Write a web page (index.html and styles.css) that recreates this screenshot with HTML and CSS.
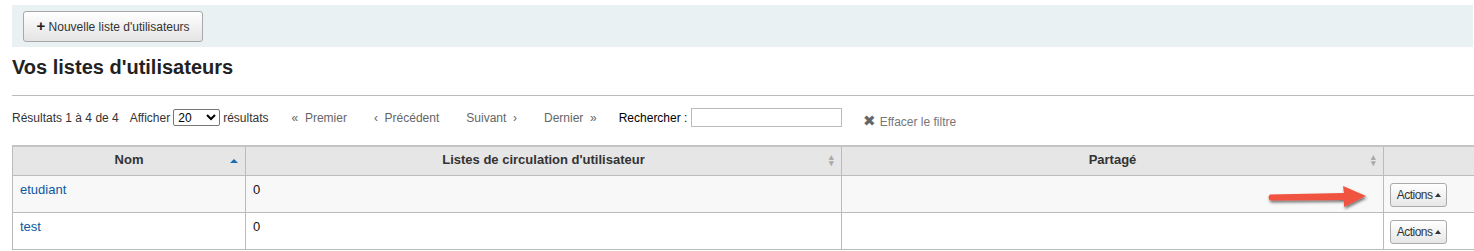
FILE: index.html
```html
<!DOCTYPE html>
<html lang="fr">
<head>
    <meta charset="UTF-8">
    <title>Listes d'utilisateurs</title>
    <link rel="stylesheet" href="styles.css">
</head>
<body>
    <div class="page">
        <!-- Barre d'outils -->
        <div class="toolbar">
            <button class="btn"><span class="plus">+</span> Nouvelle liste d'utilisateurs</button>
        </div>

        <h1 class="titre">Vos listes d'utilisateurs</h1>
        <hr class="sep">

        <!-- Pagination et recherche -->
        <div class="pager">
            <span class="info">Résultats 1 à 4 de 4</span>
            <label class="afficher">Afficher
                <select class="choix"><option>20</option></select>
                résultats</label>
            <span class="nav nav-premier">&laquo;&nbsp; Premier</span>
            <span class="nav">&lsaquo;&nbsp; Précédent</span>
            <span class="nav">Suivant &nbsp;&rsaquo;</span>
            <span class="nav">Dernier &nbsp;&raquo;</span>
            <label class="recherche">Rechercher :
                <input type="text" class="champ"></label>
            <span class="effacer"><span class="croix">&#10006;</span> Effacer le filtre</span>
        </div>

        <table class="listes">
            <colgroup>
                <col style="width: 233px">
                <col style="width: 596px">
                <col style="width: 542px">
                <col style="width: 120px">
            </colgroup>
            <thead>
                <tr>
                    <th class="tri-actif">Nom</th>
                    <th class="tri">Listes de circulation d'utilisateur</th>
                    <th class="tri">Partagé</th>
                    <th></th>
                </tr>
            </thead>
            <tbody>
                <tr class="impair">
                    <td><a href="#">etudiant</a></td>
                    <td>0</td>
                    <td></td>
                    <td class="cell-actions"><button class="btn-actions">Actions <span class="fleche"></span></button></td>
                </tr>
                <tr>
                    <td><a href="#">test</a></td>
                    <td>0</td>
                    <td></td>
                    <td class="cell-actions"><button class="btn-actions">Actions <span class="fleche"></span></button></td>
                </tr>
            </tbody>
        </table>

        <!-- Flèche d'annotation -->
        <svg class="annotation" width="110" height="30" viewBox="0 0 110 30">
            <defs>
                <filter id="ombre" x="-20%" y="-50%" width="140%" height="200%">
                    <feDropShadow dx="1" dy="2" stdDeviation="1.5" flood-color="#000" flood-opacity="0.55"/>
                </filter>
            </defs>
            <path d="M6 11.5 L80 10 L79 3 L102 13 L80 24 L80 17 L6 17.5 Q3 14.5 6 11.5 Z" fill="#f0533f" filter="url(#ombre)"/>
        </svg>
    </div>
</body>
</html>
```

FILE: styles.css
```css
*{
    box-sizing: border-box;
}
body{
    margin: 0;
    font-family: "Liberation Sans", Arial, sans-serif;
    font-size: 12px;
    color: #333;
    background: #fff;
    overflow: hidden;
}
.page{
    position: relative;
    padding: 5px 0 0 12px;
    width: 1474px;
}
.toolbar{
    background-color: #eaf1f3;
    height: 42px;
    padding: 6px 11px;
    margin-right: 1px;
}
.btn{
    height: 31px;
    width: 180px;
    border: 1px solid #a8a8a8;
    border-radius: 3px;
    background: linear-gradient(#fff, #e4e4e4);
    font-family: "Liberation Sans", Arial, sans-serif;
    font-size: 12px;
    color: #333;
    padding: 0 0 2px 0;
}
.plus{
    font-weight: bold;
    font-size: 15px;
    color: #222;
}
.titre{
    font-size: 20px;
    font-weight: bold;
    color: #222;
    margin: 9px 0 0 0;
    height: 31px;
}
.sep{
    border: none;
    border-top: 1px solid #bbb;
    margin: 8px 0 0 0;
}
.pager{
    display: flex;
    align-items: center;
    height: 41px;
    padding-top: 2px;
    white-space: nowrap;
}
.info{
    color: #333;
    margin-right: 11px;
}
.afficher{
    display: flex;
    align-items: center;
    color: #333;
}
.choix{
    width: 47px;
    height: 17px;
    margin: 0 3px 0 3px;
    font-family: "Liberation Sans", Arial, sans-serif;
    font-size: 12px;
    border: 1px solid #767676;
    border-radius: 2px;
    padding: 0;
    background: #fff;
}
.nav{
    color: #666;
    margin-left: 27px;
}
.nav-premier{
    margin-left: 23px;
}
.recherche{
    display: flex;
    align-items: center;
    color: #000;
    margin-left: 22px;
}
.champ{
    width: 151px;
    height: 19px;
    margin-left: 4px;
    border: 1px solid #bbb;
    padding: 0;
}
.effacer{
    color: #777;
    margin: 6px 0 0 21px;
}
.croix{
    font-size: 15px;
    color: #666;
}
.listes{
    table-layout: fixed;
    border-collapse: collapse;
    width: 1491px;
    margin-top: 8px;
    font-size: 13px;
}
.listes th{
    background-color: #e6e6e6;
    border: 1px solid #bbb;
    border-top: 2px solid #c4c4c4;
    height: 29px;
    font-weight: bold;
    color: #333;
    position: relative;
    text-align: center;
    padding: 0 0 2px 0;
}
.listes th.tri::after{
    content: "\25B4\A\25BE";
    position: absolute;
    right: 7px;
    top: 7px;
    white-space: pre;
    font-size: 9px;
    line-height: 6px;
    color: #aaa;
}
.listes th.tri-actif::after{
    content: "";
    position: absolute;
    right: 7px;
    top: 12px;
    border-left: 4px solid transparent;
    border-right: 4px solid transparent;
    border-bottom: 4px solid #1b6bb0;
}
.listes td{
    border: 1px solid #bbb;
    height: 37px;
    padding: 0 7px 8px 7px;
    color: #111;
    vertical-align: middle;
}
.listes tr.impair td{
    background-color: #f8f8f8;
}
.listes a{
    color: #0c58a3;
    text-decoration: none;
}
.listes td.cell-actions{
    padding: 6px 7px 4px 6px;
}
.btn-actions{
    height: 24px;
    width: 57px;
    padding: 0 0 0 1px;
    border: 1px solid #aaa;
    border-radius: 3px;
    background: linear-gradient(#fff, #e6e6e6);
    font-family: "Liberation Sans", Arial, sans-serif;
    font-size: 12px;
    letter-spacing: -0.5px;
    color: #333;
}
.fleche{
    display: inline-block;
    border-left: 3.5px solid transparent;
    border-right: 3.5px solid transparent;
    border-bottom: 4px solid #333;
    vertical-align: 2px;
}
.annotation{
    position: absolute;
    left: 1264px;
    top: 183px;
}
```
